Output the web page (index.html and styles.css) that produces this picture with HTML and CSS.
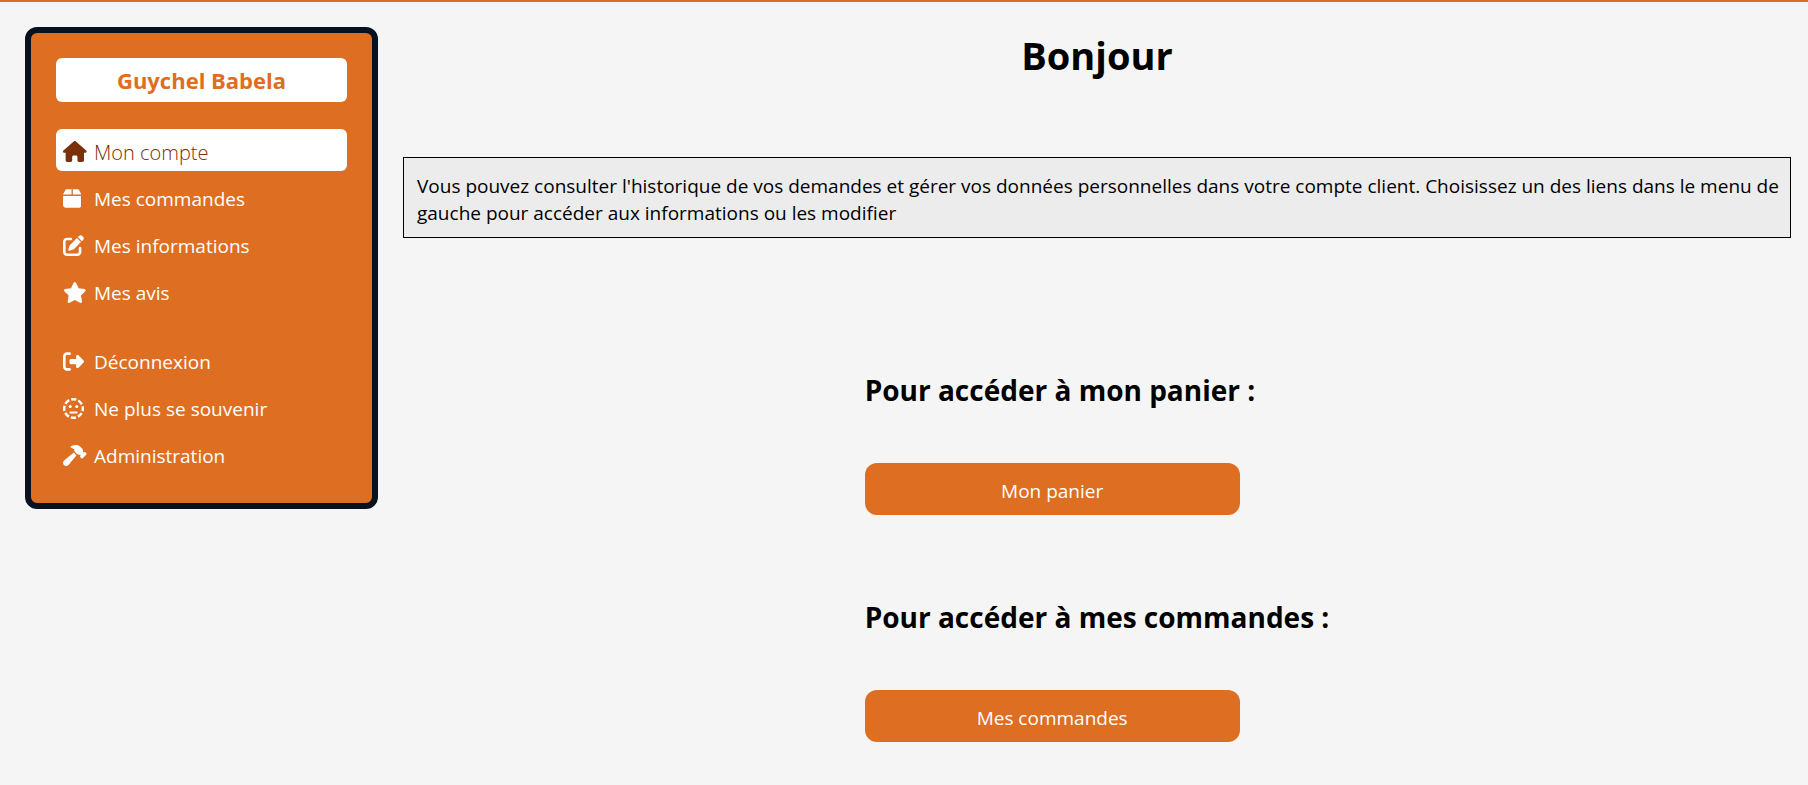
FILE: index.html
```html
<!DOCTYPE html>
<html lang="fr">
<head>
<meta charset="utf-8">
<meta name="viewport" content="width=device-width, initial-scale=1">
<title>Mon compte</title>
<link rel="stylesheet" href="styles.css">
</head>
<body>
<div class="account">
  <aside class="sidebar">
    <p class="sidebar-name">Guychel Babela</p>
    <nav class="menu" aria-label="Compte client">
      <ul class="menu-group">
        <li><a class="menu-link menu-link-active" href="#" aria-current="page">
          <span class="menu-icon"><svg class="icon" viewBox="0 0 576 512" aria-hidden="true"><path d="M575.8 255.5c0 18-15 32.1-32 32.1h-32l.7 160.2c0 2.7-.2 5.4-.5 8.1V472c0 22.1-17.9 40-40 40H456c-1.1 0-2.2 0-3.3-.1c-1.4 .1-2.8 .1-4.2 .1H416 392c-22.1 0-40-17.9-40-40V448 384c0-17.7-14.3-32-32-32H256c-17.7 0-32 14.3-32 32v64 24c0 22.1-17.9 40-40 40H160 128.1c-1.5 0-3-.1-4.5-.2c-1.2 .1-2.4 .2-3.6 .2H104c-22.1 0-40-17.9-40-40V360c0-.9 0-1.9 .1-2.8V287.6H32c-18 0-32-14-32-32.1c0-9 3-17 10-24L266.4 8c7-7 15-8 22-8s15 2 21 7L564.8 231.5c8 7 12 15 11 24z"/></svg></span>Mon compte</a></li>
        <li><a class="menu-link" href="#">
          <span class="menu-icon"><svg class="icon" viewBox="0 0 448 512" aria-hidden="true"><path d="M50.7 58.5L0 160H208V32H93.7C75.5 32 58.9 42.3 50.7 58.5zM240 160H448L397.3 58.5C389.1 42.3 372.5 32 354.3 32H240V160zm208 32H0V416c0 35.3 28.7 64 64 64H384c35.3 0 64-28.7 64-64V192z"/></svg></span>Mes commandes</a></li>
        <li><a class="menu-link" href="#">
          <span class="menu-icon"><svg class="icon" viewBox="0 0 512 512" aria-hidden="true"><path d="M471.6 21.7c-21.9-21.9-57.3-21.9-79.2 0L362.3 51.7l97.9 97.9 30.1-30.1c21.9-21.9 21.9-57.3 0-79.2L471.6 21.7zm-299.2 220c-6.1 6.1-10.8 13.6-13.5 21.9l-29.6 88.8c-2.9 8.6-.6 18.1 5.8 24.6s15.9 8.7 24.6 5.8l88.8-29.6c8.2-2.7 15.7-7.4 21.9-13.5L437.7 172.3 339.7 74.3 172.4 241.7zM96 64C43 64 0 107 0 160V416c0 53 43 96 96 96H352c53 0 96-43 96-96V320c0-17.7-14.3-32-32-32s-32 14.3-32 32v96c0 17.7-14.3 32-32 32H96c-17.7 0-32-14.3-32-32V160c0-17.7 14.3-32 32-32h96c17.7 0 32-14.3 32-32s-14.3-32-32-32H96z"/></svg></span>Mes informations</a></li>
        <li><a class="menu-link" href="#">
          <span class="menu-icon"><svg class="icon" viewBox="0 0 576 512" aria-hidden="true"><path d="M316.9 18C311.6 7 300.4 0 288.1 0s-23.4 7-28.8 18L195 150.3 51.4 171.5c-12 1.8-22 10.2-25.7 21.7s-.7 24.2 7.9 32.7L137.8 329 113.2 474.7c-2 12 3 24.2 12.9 31.3s23 8 33.8 2.3l128.3-68.5 128.3 68.5c10.8 5.7 23.9 4.9 33.8-2.3s14.9-19.3 12.9-31.3L438.5 329 542.7 225.9c8.6-8.5 11.7-21.2 7.9-32.7s-13.7-19.9-25.7-21.7L381.2 150.3 316.9 18z"/></svg></span>Mes avis</a></li>
      </ul>
      <ul class="menu-group">
        <li><a class="menu-link" href="#">
          <span class="menu-icon"><svg class="icon" viewBox="0 0 512 512" aria-hidden="true"><path d="M377.9 105.9L500.7 228.7c7.2 7.2 11.3 17.1 11.3 27.3s-4.1 20.1-11.3 27.3L377.9 406.1c-6.4 6.4-15 9.9-24 9.9c-18.7 0-33.9-15.2-33.9-33.9l0-62.1-128 0c-17.7 0-32-14.3-32-32l0-64c0-17.7 14.3-32 32-32l128 0 0-62.1c0-18.7 15.2-33.9 33.9-33.9c9 0 17.6 3.6 24 9.9zM160 96L96 96c-17.7 0-32 14.3-32 32l0 256c0 17.7 14.3 32 32 32l64 0c17.7 0 32 14.3 32 32s-14.3 32-32 32l-64 0c-53 0-96-43-96-96L0 128C0 75 43 32 96 32l64 0c17.7 0 32 14.3 32 32s-14.3 32-32 32z"/></svg></span>Déconnexion</a></li>
        <li><a class="menu-link" href="#">
          <span class="menu-icon"><svg class="icon" viewBox="0 0 512 512" aria-hidden="true"><circle cx="256" cy="256" r="227" fill="none" stroke="currentColor" stroke-width="60" stroke-dasharray="128 50.285" stroke-dashoffset="64"/><circle cx="176" cy="208" r="38"/><circle cx="336" cy="208" r="38"/><path d="M180 352H332" fill="none" stroke="currentColor" stroke-width="50" stroke-linecap="round"/></svg></span>Ne plus se souvenir</a></li>
        <li><a class="menu-link" href="#">
          <span class="menu-icon"><svg class="icon" viewBox="0 0 576 512" aria-hidden="true"><path d="M413.5 237.5c-28.2 4.8-58.2-3.6-80-25.4l-38.1-38.1C280.4 159 272 138.8 272 117.6V105.5L192.3 62c-5.3-2.9-8.6-8.6-8.3-14.7s3.9-11.5 9.5-14l47.2-21C259.1 4.2 279 0 299.2 0h18.1c36.7 0 72 14 98.7 39.1l44.6 42c24.2 22.8 33.2 55.7 26.6 86L503 183l8-8c9.4-9.4 24.6-9.4 33.9 0l24 24c9.4 9.4 9.4 24.6 0 33.9l-88 88c-9.4 9.4-24.6 9.4-33.9 0l-24-24c-9.4-9.4-9.4-24.6 0-33.9l8-8-17.5-17.5zM27.4 377.1L260.9 182.6c3.5 4.9 7.5 9.6 11.8 14l38.1 38.1c6 6 12.4 11.2 19.2 15.7L134.9 484.6c-14.5 17.4-36 27.4-58.6 27.4C34.1 512 0 477.8 0 435.7c0-22.6 10.1-44.1 27.4-58.6z"/></svg></span>Administration</a></li>
      </ul>
    </nav>
  </aside>
  <main class="content">
    <h1 class="title">Bonjour</h1>
    <p class="notice">Vous pouvez consulter l'historique de vos demandes et gérer vos données personnelles dans votre compte client. Choisissez un des liens dans le menu de gauche pour accéder aux informations ou les modifier</p>
    <div class="shortcuts">
      <section class="shortcut">
        <h2 class="shortcut-title">Pour accéder à mon panier :</h2>
        <button class="button" type="button">Mon panier</button>
      </section>
      <section class="shortcut">
        <h2 class="shortcut-title">Pour accéder à mes commandes :</h2>
        <button class="button" type="button">Mes commandes</button>
      </section>
    </div>
  </main>
</div>
</body>
</html>
```

FILE: styles.css
```css
:root {
  --orange: #dd6e22;
  --navy: #06121f;
  --brown: #7a300a;
}

* {
  box-sizing: border-box;
}

body {
  margin: 0;
  border-top: 2px solid var(--orange);
  background: #f5f5f5;
  color: #000;
  font-family: "Segoe UI", "Open Sans", "Noto Sans", sans-serif;
  font-size: 19px;
  line-height: 27px;
}

.account {
  display: flex;
  align-items: flex-start;
  gap: 25px;
  padding: 25px 17px 25px 25px;
}

.sidebar {
  flex: none;
  width: 353px;
  padding: 25px 25px 28px;
  border: 6px solid var(--navy);
  border-radius: 12px;
  background: var(--orange);
}

.sidebar-name {
  margin: 0 0 27px;
  padding: 8px;
  border-radius: 6px;
  background: #fff;
  color: var(--orange);
  font-size: 22px;
  font-weight: 700;
  line-height: 28px;
  text-align: center;
}

.menu {
  display: flex;
  flex-direction: column;
  gap: 27px;
}

.menu-group {
  display: flex;
  flex-direction: column;
  gap: 5px;
  margin: 0;
  padding: 0;
  list-style: none;
}

.menu-link {
  display: flex;
  align-items: center;
  padding: 10px 7px 5px;
  border-radius: 6px;
  color: #fff;
  text-decoration: none;
}

.menu-link-active {
  background: #fff;
  color: var(--brown);
  font-size: 20px;
  font-weight: 300;
}

.menu-icon {
  display: flex;
  flex: none;
  width: 31px;
  padding-bottom: 2px;
}

.icon {
  height: 21px;
  fill: currentColor;
}

.content {
  flex: 1;
  min-width: 0;
}

.title {
  margin: 0 0 74px;
  font-size: 38px;
  line-height: 56px;
  text-align: center;
}

.notice {
  margin: 0;
  padding: 15px 8px 10px 13px;
  border: 1px solid #000;
  background: #ececec;
}

.shortcuts {
  display: flex;
  flex-direction: column;
  gap: 81px;
  width: fit-content;
  margin: 131px auto 0;
}

.shortcut-title {
  margin: 0 0 51px;
  font-size: 28px;
  line-height: 43px;
}

.button {
  display: block;
  width: 375px;
  padding: 15px 12px 10px;
  border: 0;
  border-radius: 12px;
  background: var(--orange);
  color: #fff;
  font: inherit;
  cursor: pointer;
}
```
